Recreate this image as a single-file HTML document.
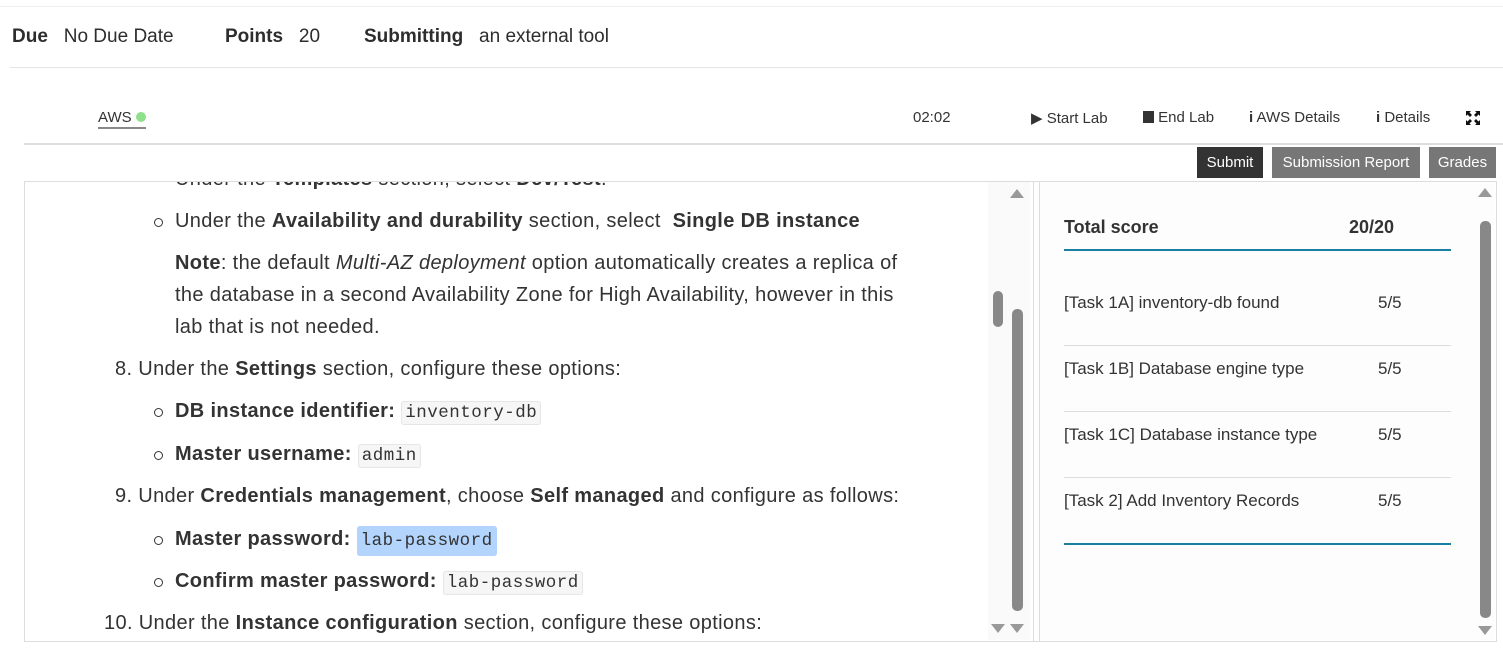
<!DOCTYPE html>
<html><head><meta charset="utf-8"><style>
body{margin:0;width:1503px;height:650px;overflow:hidden;background:#fff;font-family:"Liberation Sans",sans-serif;color:#2d2d2d;position:relative}
.a{position:absolute;white-space:nowrap}
.t{font-size:20px;letter-spacing:0.35px;color:#333}
code{font-family:"Liberation Mono",monospace;font-size:17.5px;background:#f6f6f6;border:1px solid #e6e6e6;border-radius:3px;padding:1px 3px;letter-spacing:0.5px}
.bul{position:absolute;width:7px;height:7px;border:1.5px solid #333;border-radius:50%}
.tb{font-size:15px;color:#333}
.btn{position:absolute;top:147px;height:31px;line-height:31px;color:#fff;font-size:15px;text-align:center;background:#777}
.sr{position:absolute;left:1064px;font-size:17px;color:#333}
.hl{position:absolute;left:1064px;width:387px;height:1px;background:#ddd}
.ar{position:absolute;width:0;height:0;border-left:7px solid transparent;border-right:7px solid transparent}
.up{border-bottom:9px solid #999}
.dn{border-top:9px solid #999}
</style></head><body>
<div class="a" style="left:0;top:6px;width:1503px;height:1px;background:#eee"></div>
<div class="a" style="left:12px;top:26px;font-size:19px"><b>Due</b>&nbsp;&nbsp; No Due Date</div>
<div class="a" style="left:225px;top:26px;font-size:19px"><b>Points</b>&nbsp;&nbsp; 20</div>
<div class="a" style="left:364px;top:26px;font-size:19px"><b>Submitting</b>&nbsp;&nbsp; an external tool</div>
<div class="a" style="left:10px;top:67px;width:1493px;height:1px;background:#e5e5e5"></div>

<div class="a tb" style="left:98px;top:109px;border-bottom:2px solid #888;padding-bottom:1px">AWS <span style="display:inline-block;width:10px;height:10px;border-radius:50%;background:#8fe08a;vertical-align:0"></span></div>
<div class="a tb" style="left:913px;top:109px">02:02</div>
<div class="a tb" style="left:1031px;top:109px">▶ Start Lab</div>
<div class="a tb" style="left:1143px;top:109px"><span style="display:inline-block;width:11px;height:12px;background:#333;vertical-align:-1px"></span> End Lab</div>
<div class="a tb" style="left:1249px;top:109px"><b>i</b> AWS Details</div>
<div class="a tb" style="left:1376px;top:109px"><b>i</b> Details</div>
<svg class="a" style="left:1466px;top:111px" width="14" height="14" viewBox="0 0 14 14"><g fill="#111"><path d="M0 0h5L3.5 1.5 6 4 4 6 1.5 3.5 0 5z"/><path d="M14 0v5l-1.5-1.5L10 6 8 4l2.5-2.5L9 0z"/><path d="M0 14V9l1.5 1.5L4 8l2 2-2.5 2.5L5 14z"/><path d="M14 14H9l1.5-1.5L8 10l2-2 2.5 2.5L14 9z"/></g></svg>
<div class="a" style="left:24px;top:143px;width:1479px;height:2px;background:#ddd"></div>

<div class="btn" style="left:1197px;width:66px;background:#333">Submit</div>
<div class="btn" style="left:1272px;width:148px">Submission Report</div>
<div class="btn" style="left:1429px;width:67px">Grades</div>

<div class="a" style="left:24px;top:181px;width:1471px;height:459px;border:1px solid #ddd"></div>
<div class="a" style="left:1033px;top:182px;width:5px;height:459px;border-left:1px solid #ddd;border-right:1px solid #ddd"></div>
<div class="a" style="left:1040px;top:183px;width:455px;height:457px;background:#fdfdfd"></div>

<div class="a" style="left:25px;top:182px;width:963px;height:458px;overflow:hidden">
 <div class="a t" style="left:150px;top:-14px">Under the <b>Templates</b> section, select <b>Dev/Test</b>.</div>
 <div class="bul" style="left:129px;top:36px"></div>
 <div class="a t" style="left:150px;top:28px">Under the <b>Availability and durability</b> section, select &nbsp;<b>Single DB instance</b></div>
 <div class="a t" style="left:150px;top:70px"><b>Note</b>: the default <i>Multi-AZ deployment</i> option automatically creates a replica of</div>
 <div class="a t" style="left:150px;top:102px">the database in a second Availability Zone for High Availability, however in this</div>
 <div class="a t" style="left:150px;top:134px">lab that is not needed.</div>
 <div class="a t" style="left:90px;top:176px">8. Under the <b>Settings</b> section, configure these options:</div>
 <div class="bul" style="left:129px;top:226px"></div>
 <div class="a t" style="left:150px;top:218px"><b>DB instance identifier:</b> <code>inventory-db</code></div>
 <div class="bul" style="left:129px;top:269px"></div>
 <div class="a t" style="left:150px;top:261px"><b>Master username:</b> <code>admin</code></div>
 <div class="a t" style="left:90px;top:303px">9. Under <b>Credentials management</b>, choose <b>Self managed</b> and configure as follows:</div>
 <div class="bul" style="left:129px;top:354px"></div>
 <div class="a t" style="left:150px;top:346px"><b>Master password:</b> <code style="background:#b3d4fc;border-color:#b3d4fc;padding:4px 3px">lab-password</code></div>
 <div class="bul" style="left:129px;top:396px"></div>
 <div class="a t" style="left:150px;top:388px"><b>Confirm master password:</b> <code>lab-password</code></div>
 <div class="a t" style="left:79px;top:430px">10. Under the <b>Instance configuration</b> section, configure these options:</div>
</div>

<div class="a" style="left:988px;top:182px;width:42px;height:458px;background:#fafafa"></div>
<div class="ar up" style="left:1010px;top:189px"></div>
<div class="a" style="left:993px;top:291px;width:10px;height:36px;border-radius:5px;background:#888"></div>
<div class="a" style="left:1012px;top:309px;width:11px;height:302px;border-radius:5px;background:#888"></div>
<div class="ar dn" style="left:991px;top:624px"></div>
<div class="ar dn" style="left:1010px;top:624px"></div>

<div class="a" style="left:1064px;top:217px;font-size:18px;font-weight:bold;color:#333">Total score</div>
<div class="a" style="left:1349px;top:217px;font-size:18px;font-weight:bold;color:#333">20/20</div>
<div class="a" style="left:1064px;top:249px;width:387px;height:2px;background:#1a7fa0"></div>
<div class="sr" style="top:293px">[Task 1A] inventory-db found</div><div class="sr" style="left:1378px;top:293px">5/5</div>
<div class="hl" style="top:345px"></div>
<div class="sr" style="top:359px">[Task 1B] Database engine type</div><div class="sr" style="left:1378px;top:359px">5/5</div>
<div class="hl" style="top:411px"></div>
<div class="sr" style="top:425px">[Task 1C] Database instance type</div><div class="sr" style="left:1378px;top:425px">5/5</div>
<div class="hl" style="top:477px"></div>
<div class="sr" style="top:491px">[Task 2] Add Inventory Records</div><div class="sr" style="left:1378px;top:491px">5/5</div>
<div class="a" style="left:1064px;top:543px;width:387px;height:2px;background:#1a7fa0"></div>

<div class="ar up" style="left:1478px;top:188px"></div>
<div class="a" style="left:1480px;top:221px;width:11px;height:397px;border-radius:5px;background:#888"></div>
<div class="ar dn" style="left:1478px;top:626px"></div>
</body></html>
